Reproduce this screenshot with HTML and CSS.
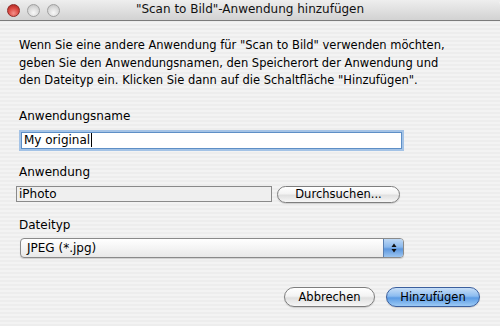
FILE: index.html
```html
<!DOCTYPE html>
<html lang="de">
<head>
<meta charset="utf-8">
<link rel="stylesheet" href="styles.css">
</head>
<body>
<div class="window">
  <div class="titlebar">
    <div class="lights">
      <span class="light close"></span>
      <span class="light"></span>
      <span class="light"></span>
    </div>
    <div class="title">"Scan to Bild"-Anwendung hinzufügen</div>
  </div>
  <div class="content">
    <p class="intro">Wenn Sie eine andere Anwendung für "Scan to Bild" verwenden möchten,<br>geben Sie den Anwendungsnamen, den Speicherort der Anwendung und<br>den Dateityp ein. Klicken Sie dann auf die Schaltfläche "Hinzufügen".</p>
    <div class="label l1">Anwendungsname</div>
    <div class="textfield"><span>My original</span><span class="caret"></span></div>
    <div class="label l2">Anwendung</div>
    <div class="approw">
      <div class="appfield">iPhoto</div>
      <div class="btn browse">Durchsuchen...</div>
    </div>
    <div class="label l3">Dateityp</div>
    <div class="popup">
      <span class="popup-text">JPEG (*.jpg)</span>
      <span class="arrows">
        <svg width="8" height="12" viewBox="0 0 8 12"><path d="M4 1.5 L6.5 5 L1.5 5 Z" fill="#111"/><path d="M4 10.5 L6.5 7 L1.5 7 Z" fill="#111"/></svg>
      </span>
    </div>
    <div class="actions">
      <div class="btn cancel">Abbrechen</div>
      <div class="btn default">Hinzufügen</div>
    </div>
  </div>
</div>
</body>
</html>
```
FILE: styles.css
```css
html, body {
  margin: 0;
  padding: 0;
  width: 500px;
  height: 326px;
  overflow: hidden;
  background: #ececec;
}
.window {
  width: 500px;
  height: 326px;
  font-family: "DejaVu Sans", "Liberation Sans", sans-serif;
  font-size: 11.5px;
  color: #000;
  background: repeating-linear-gradient(to bottom, #ededed 0px, #ededed 2px, #f3f3f3 2px, #f3f3f3 4px);
  display: flex;
  flex-direction: column;
}
.titlebar {
  height: 20px;
  flex: none;
  border-bottom: 1px solid #7c7c7c;
  border-top-right-radius: 5px;
  border-top-left-radius: 5px;
  background: linear-gradient(to bottom, #eeeeee 0%, #e0e0e0 50%, #d2d2d2 100%);
  display: flex;
  align-items: center;
  position: relative;
}
.lights {
  display: flex;
  gap: 7px;
  padding-left: 7px;
}
.light {
  width: 13px;
  height: 13px;
  border-radius: 50%;
  border: 1px solid #a0a0a0;
  background: radial-gradient(circle at 50% 70%, #f8f8f8 0%, #dadada 55%, #bcbcbc 100%);
  box-sizing: border-box;
}
.light.close {
  border-color: #8e2a26;
  background: radial-gradient(circle at 50% 75%, #f49089 0%, #dc4a43 50%, #a51f1a 100%);
}
.title {
  position: absolute;
  left: 0;
  right: 0;
  top: 2px;
  text-align: center;
  font-size: 12px;
  color: #111;
}
.content {
  padding: 0 0 0 19px;
  display: flex;
  flex-direction: column;
}
.intro {
  margin: 16px 0 0 0;
  line-height: 17.5px;
  white-space: nowrap;
}
.label {
  line-height: 16px;
  font-size: 12px;
}
.l1 { margin-top: 18px; }
.l2 { margin-top: 15px; }
.l3 { margin-top: 14px; }
.textfield {
  margin-top: 8px;
  margin-left: 2px;
  width: 381px;
  height: 17px;
  box-sizing: border-box;
  background: #fff;
  border: 1px solid #5e8fc6;
  box-shadow: 0 0 0 2px #a4c3e6;
  display: flex;
  align-items: center;
  padding-left: 2px;
  font-size: 12px;
}
.caret {
  width: 1px;
  height: 14px;
  background: #000;
  margin-left: 1px;
}
.approw {
  margin-top: 6px;
  margin-left: -3px;
  display: flex;
  align-items: center;
  gap: 5px;
}
.appfield {
  width: 256px;
  height: 16px;
  box-sizing: border-box;
  border: 1px solid #8a8a8a;
  background: #efefef;
  padding-left: 2px;
  line-height: 14px;
  font-size: 12px;
}
.btn {
  height: 20px;
  box-sizing: border-box;
  border-radius: 10px;
  border: 1px solid #7e7e7e;
  background: linear-gradient(to bottom, #ffffff 0%, #f3f3f3 45%, #e0e0e0 55%, #f6f6f6 100%);
  display: flex;
  align-items: center;
  justify-content: center;
  font-size: 11.5px;
  box-shadow: 0 1px 1px rgba(0,0,0,0.15);
}
.browse {
  width: 123px;
  height: 17px;
}
.popup {
  margin-top: 5px;
  margin-left: 1px;
  width: 384px;
  height: 20px;
  box-sizing: border-box;
  border: 1px solid #8a8a8a;
  border-radius: 4px;
  background: linear-gradient(to bottom, #ffffff 0%, #f4f4f4 50%, #e8e8e8 100%);
  display: flex;
  align-items: center;
  justify-content: space-between;
  overflow: hidden;
  font-size: 12px;
  box-shadow: 0 1px 1px rgba(0,0,0,0.15);
}
.popup-text {
  padding-left: 6px;
}
.arrows {
  width: 19px;
  height: 20px;
  display: flex;
  align-items: center;
  justify-content: center;
  background: linear-gradient(to bottom, #c4dcf6 0%, #8ab8ec 45%, #5d97de 55%, #a4cbf3 100%);
  border-left: 1px solid #5a7fb0;
}
.actions {
  margin-top: 29px;
  margin-right: 20px;
  display: flex;
  justify-content: flex-end;
  gap: 11px;
}
.cancel {
  width: 91px;
}
.default {
  width: 94px;
  border-color: #3b5f9d;
  background: linear-gradient(to bottom, #c7def7 0%, #8cbcf0 45%, #5b9be4 55%, #9ccaf5 100%);
}
```
